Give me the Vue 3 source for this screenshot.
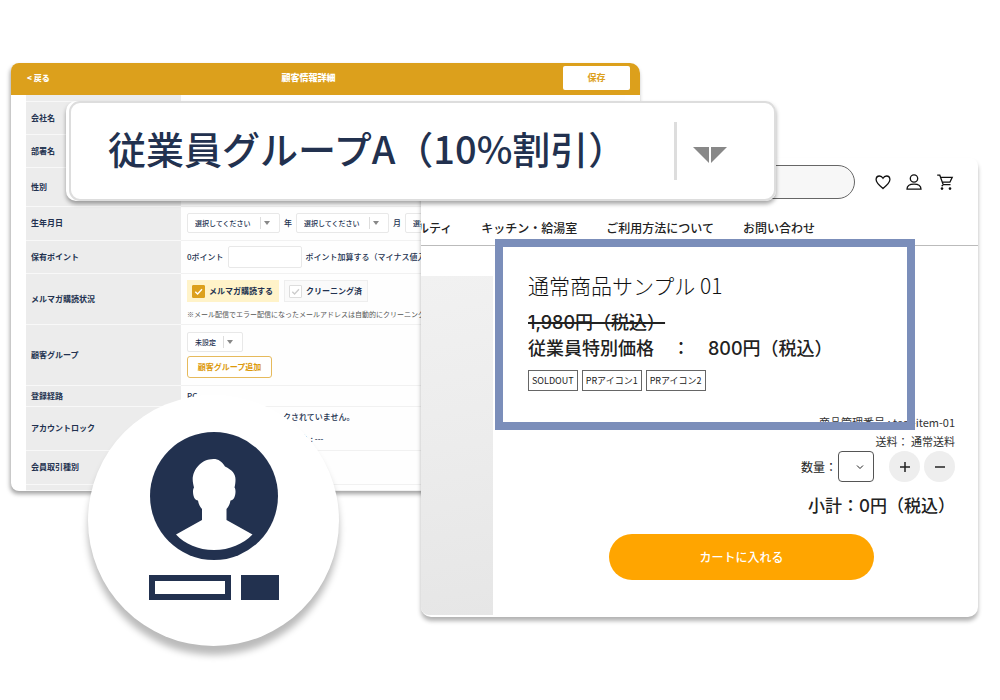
<script setup>
const labels = {
  company: '会社名',
  department: '部署名',
  gender: '性別',
}
const tags = ['SOLDOUT', 'PRアイコン1', 'PRアイコン2']
const navItems = ['ノベルティ', 'キッチン・給湯室', 'ご利用方法について', 'お問い合わせ']
</script>

<template>
  <main class="stage">
    <section class="admin" aria-label="顧客情報詳細">
      <header class="admin-head">
        <a class="back" href="#">&lt; 戻る</a>
        <h1>顧客情報詳細</h1>
        <button class="save" type="button">保存</button>
      </header>
      <div class="admin-body">
        <table>
          <tbody>
            <tr class="h-edge"><th></th><td></td></tr>
            <tr class="h-s"><th>{{ labels.company }}</th><td></td></tr>
            <tr class="h-s"><th>{{ labels.department }}</th><td></td></tr>
            <tr class="h-m"><th>{{ labels.gender }}</th><td></td></tr>
            <tr class="h-s2">
              <th>生年月日</th>
              <td>
                <div class="line">
                  <span class="pick"><select aria-label="年"><option>選択してください</option></select><i></i></span>
                  <span class="unit">年</span>
                  <span class="pick"><select aria-label="月"><option>選択してください</option></select><i></i></span>
                  <span class="unit">月</span>
                  <span class="pick"><select aria-label="日"><option>選択してください</option></select><i></i></span>
                </div>
              </td>
            </tr>
            <tr class="h-s">
              <th>保有ポイント</th>
              <td>
                <label class="line points">0ポイント<input type="text" />ポイント加算する（マイナス値入力可）</label>
              </td>
            </tr>
            <tr class="h-mail">
              <th>メルマガ購読状況</th>
              <td>
                <div class="line checks">
                  <label class="check on"><input type="checkbox" checked /><svg viewBox="0 0 12 12"><path d="M2.5 6.2 5 8.7 9.8 3.6" /></svg>メルマガ購読する</label>
                  <label class="check"><input type="checkbox" /><svg viewBox="0 0 12 12"><path d="M2.5 6.2 5 8.7 9.8 3.6" /></svg>クリーニング済</label>
                </div>
                <p class="note">※メール配信でエラー配信になったメールアドレスは自動的にクリーニングされます</p>
              </td>
            </tr>
            <tr class="h-group">
              <th>顧客グループ</th>
              <td>
                <span class="pick small"><select aria-label="顧客グループ"><option>未設定</option></select><i></i></span>
                <button class="add" type="button">顧客グループ追加</button>
              </td>
            </tr>
            <tr class="h-route"><th>登録経路</th><td>PC</td></tr>
            <tr class="h-lock">
              <th>アカウントロック</th>
              <td><p class="lock">このアカウントは現在ロックされていません。</p><p class="lock">アカウントロックの解除予定日時&nbsp; : ---</p></td>
            </tr>
            <tr class="h-s2"><th>会員取引種別</th><td></td></tr>
            <tr class="h-edge"><th></th><td></td></tr>
          </tbody>
        </table>
      </div>
    </section>

    <section class="shop" aria-label="商品ページ">
      <div class="shop-top">
        <input class="search" type="search" aria-label="検索" />
        <a href="#" aria-label="お気に入り"><svg viewBox="0 0 18 18"><path d="M9 15.6C4.6 12 2.1 9.600 2.100 6.600 2.100 4.400 3.700 3 5.500 3 7 3 8.200 3.800 9 5.200 9.800 3.800 11 3 12.500 3c1.800 0 3.400 1.400 3.400 3.600 0 3-2.500 5.400-6.900 9z" /></svg></a>
        <a href="#" aria-label="マイページ"><svg viewBox="0 0 18 18"><circle cx="9" cy="5.500" r="3.700" /><path d="M2 16.200c0-3.700 2.300-5 7-5s7 1.300 7 5z" /></svg></a>
        <a href="#" aria-label="カート"><svg viewBox="0 0 18 18"><path d="M1.200 2.200h2.600l3.400 9.400h7.300M4.600 4.400h11.600l-2.300 4.800H6.400M7.200 11.600l-1.500 1.600" /><circle class="dot" cx="6" cy="15.600" r="1.300" /><circle class="dot" cx="14" cy="15.600" r="1.300" /></svg></a>
      </div>
      <nav class="shop-nav"><a v-for="n in navItems" :key="n" href="#">{{ n }}</a></nav>
      <div class="shop-body">
        <div class="photo"></div>
        <div class="buy">
          <p class="meta">商品管理番号 : test-item-01</p>
          <p class="meta">送料： 通常送料</p>
          <div class="qty">
            <label for="qty">数量：</label>
            <span class="qty-pick"><select id="qty"><option></option></select><svg viewBox="0 0 8 8"><path d="M1 2.500 4 5.500 7 2.500" /></svg></span>
            <button type="button" aria-label="増やす"><svg viewBox="0 0 12 12"><path d="M1 6h10M6 1v10" /></svg></button>
            <button type="button" aria-label="減らす"><svg viewBox="0 0 12 12"><path d="M1 6h10" /></svg></button>
          </div>
          <p class="subtotal">小計：0円（税込）</p>
          <button class="cart" type="button">カートに入れる</button>
        </div>
      </div>
      <article class="highlight">
        <h2>通常商品サンプル 01</h2>
        <p class="price"><s>1,980円（税込）</s></p>
        <p class="price">従業員特別価格　：　800円（税込）</p>
        <ul><li v-for="t in tags" :key="t">{{ t }}</li></ul>
      </article>
    </section>

    <div class="zoomed">
      <div class="zoomed-in">
        <select aria-label="顧客グループ選択"><option>従業員グループA（10%割引）</option></select>
        <span class="bar"></span>
        <svg viewBox="0 0 34 17"><path d="M0 0h16v16zM18 0h16L18 16z" /></svg>
      </div>
    </div>

    <div class="member">
      <svg class="avatar" viewBox="0 0 128 128">
        <circle cx="64" cy="64" r="64" fill="#22314f" />
        <path fill="#fff" d="M52 88V77c-2-2-3.500-5-4-8.500-3 0-5-4-5-9 0-2 .4-3 1-4-.6-3-1.300-5-1.300-8C42.700 38 51 27 63.500 27c5 0 8.500 2.500 11.500 7.500 7 3.500 10.500 7 10.500 13 0 3-.3 5-1 8 .8 1 1 2.500 1 4 0 5-2 9-5 9-.5 3.500-2 6.500-4 8.500v11l26 14.500C93 112 80 118 64 118S35 112 26 102.500z" />
      </svg>
      <div class="plates"><span class="plate open"></span><span class="plate solid"></span></div>
    </div>
  </main>
</template>

<style>
body { background: #fff; }
</style>

<style scoped>
.stage, .stage * { box-sizing: border-box; }
.stage {
  position: relative;
  min-height: 100vh;
  overflow: hidden;
  font-family: "Noto Sans CJK JP", sans-serif;
  color: #22314f;
}
h1, h2, p, ul { margin: 0; padding: 0; }
a { color: inherit; text-decoration: none; }
button, input, select { font: inherit; color: inherit; margin: 0; }
select { appearance: none; background: none; border: 0; padding: 0; outline: 0; }

/* Admin window */
.admin {
  position: absolute;
  left: 1.1%;
  top: 63px;
  width: 62.9%;
  border-radius: 8px 10px 8px 8px;
  background: #fff;
  box-shadow: -1px 3px 4px rgba(0, 0, 0, .36);
  overflow: hidden;
  font-size: 8px;
  font-weight: 500;
}
.admin-head {
  display: grid;
  grid-template-columns: 1fr auto 1fr;
  align-items: center;
  height: 32px;
  padding: 0 10px 2px 16px;
  background: #dca01c;
  color: #fff;
}
.back { font-weight: 900; padding-bottom: 2px; }
.admin-head h1 { font-size: 9px; line-height: 12px; font-weight: 900; padding: 0 40px 0 0; }
.save {
  justify-self: end;
  width: 67px;
  height: 24px;
  border: 0;
  border-radius: 2px;
  background: #fff;
  color: #dca01c;
  font-size: 9px;
  font-weight: 700;
  padding: 0 0 2px;
}
.admin-body { padding: 0 15px; }
table { width: 100%; border-collapse: collapse; table-layout: fixed; line-height: 12px; }
tr > * { border-bottom: 1px solid #f1f1f1; padding: 0 5px; text-align: left; vertical-align: middle; }
th { width: 155px; background: #ececec; font-weight: 700; border-bottom-color: #f8f8f8; }
td { white-space: nowrap; background: #fefefe; padding-left: 6px; }
.h-edge { height: 6px; }
.h-s { height: 33px; }
.h-s2 { height: 34px; }
.h-m { height: 39px; }
.h-mail { height: 51px; }
.h-group { height: 61px; }
.h-route { height: 21px; }
.h-lock { height: 44px; }
.line { display: flex; align-items: center; }
.pick {
  display: flex;
  align-items: center;
  width: 93px;
  height: 20px;
  flex: none;
  border: 1px solid #e8e8e8;
  border-radius: 2px;
  background: #fff;
  padding: 0 6px 0 7px;
  font-size: 7px;
}
.pick select { flex: 1; min-width: 0; height: 18px; }
.pick i { display: flex; align-items: center; width: 13px; height: 12px; border-left: 1px solid #ddd; }
.pick i::after { content: ""; margin-left: 3px; border: 3px solid transparent; border-top: 4px solid #888; border-bottom: 0; }
.pick.small { width: 56px; margin-bottom: 4px; }
.unit { width: 16px; text-align: center; flex: none; }
.points input { width: 74px; height: 22px; margin: 0 4px; border: 1px solid #e8e8e8; border-radius: 2px; }
.checks { gap: 5px; margin-top: 2px; }
.check { display: flex; align-items: center; height: 22px; padding: 0 5px 0 4px; border: 1px solid #eee; background: #fafafa; font-weight: 700; position: relative; }
.check input { position: absolute; opacity: 0; }
.check svg { width: 13px; height: 13px; margin-right: 4px; border: 1px solid #ddd; border-radius: 1px; background: #fff; fill: none; stroke: #ccc; stroke-width: 1.500; }
.check.on { background: #fff3c9; border-color: #fff3c9; }
.check.on svg { background: #dca01c; border-color: #dca01c; stroke: #fff; }
.note { margin-top: 7px; font-size: 7px; line-height: 10px; color: #555; font-weight: 400; }
.add { display: block; width: 85px; height: 22px; padding: 0; border: 1px solid #e6ba5c; border-radius: 3px; background: #fff; color: #dc9a0c; font-weight: 700; }
.lock + .lock { margin-top: 10px; }

/* Shop window */
.shop {
  position: absolute;
  left: 42.1%;
  top: 158px;
  width: 55.7%;
  border-radius: 8px 8px 10px 10px;
  background: #fff;
  box-shadow: 0 4px 4px rgba(0, 0, 0, .3);
  color: #222;
}
.shop-top { display: flex; align-items: center; gap: 13px; padding: 7px 24px 0 40px; }
.search { flex: 1; min-width: 0; height: 34px; margin-right: 6px; border: 1px solid #666; border-radius: 17px; background: #f7f7f7; padding: 0 16px; }
.shop-top svg { display: block; width: 18px; height: 18px; fill: none; stroke: #111; stroke-width: 1.300; }
.shop-top svg .dot { fill: #111; stroke: none; }
.shop-nav {
  display: flex;
  justify-content: flex-end;
  gap: 29px;
  padding: 19px 163px 7px 0;
  overflow: hidden;
  border-bottom: 1px solid #bbb;
  font-size: 12px;
  line-height: 20px;
  font-weight: 500;
  white-space: nowrap;
}
.shop-nav a { flex: none; }
.shop-body { display: flex; padding-bottom: 2px; }
.photo { width: 72px; margin-top: 30px; border-bottom-left-radius: 8px; background: linear-gradient(170deg, #f1f1f1, #ececec 50%, #e6e6e6); }
.buy { flex: 1; display: flex; flex-direction: column; align-items: flex-end; padding: 167px 23px 35px 0; }
.meta { font-size: 11px; line-height: 19px; color: #333; }
.qty { display: flex; align-items: center; height: 31px; font-size: 12px; }
.qty-pick { display: flex; align-items: center; width: 36px; height: 31px; margin: 0 15px 0 1px; padding-right: 9px; border: 1px solid #555; border-radius: 4px; }
.qty-pick select { flex: 1; min-width: 0; height: 29px; }
.qty svg { fill: none; stroke: #222; stroke-width: 1; }
.qty-pick svg { width: 8px; height: 8px; }
.qty button { display: flex; align-items: center; justify-content: center; width: 31px; height: 31px; border: 0; border-radius: 50%; background: #eee; padding: 0; }
.qty button + button { margin-left: 4px; }
.qty button svg { width: 12px; height: 12px; stroke-width: 1.500; }
.subtotal { margin-top: 10px; font-family: Inter, "Noto Sans CJK JP", sans-serif; font-size: 17px; line-height: 28px; font-weight: 500; }
.cart { align-self: stretch; margin: 14px 81px 0 116px; height: 46px; border: 0; border-radius: 23px; background: #ffa500; color: #fff; font-size: 12px; font-weight: 500; padding: 0 0 2px; }
.highlight {
  position: absolute;
  left: 74px;
  right: 63px;
  top: 81px;
  height: 191px;
  padding: 23px 25px;
  border: 8px solid #7b8eba;
}
.highlight h2 { font-size: 21px; line-height: 30px; font-weight: 300; color: #111; }
.price { font-family: Inter, "Noto Sans CJK JP", sans-serif; font-size: 18px; line-height: 26px; font-weight: 500; white-space: nowrap; }
.price s { text-decoration-thickness: 2px; }
h2 + .price { margin-top: 10px; }
.highlight ul { display: flex; gap: 4px; margin-top: 8px; list-style: none; }
.highlight li { padding: 0 3px; border: 1px solid #666; font-size: 9px; line-height: 19px; }

/* Enlarged select */
.zoomed {
  position: absolute;
  left: 6.6%;
  top: 101px;
  width: 71%;
  padding-left: 3px;
  border-radius: 10px;
  background: #fff;
  box-shadow: 0 3px 4px rgba(0, 0, 0, .35);
}
.zoomed-in { display: flex; align-items: center; height: 100px; padding: 0 47px 0 37px; border: 2px solid #ddd; border-radius: 11px; }
.zoomed select { flex: 1; min-width: 0; height: 62px; padding-bottom: 6px; font-size: 38px; line-height: 56px; font-weight: 500; }
.bar { width: 3px; height: 58px; background: #ddd; margin-right: 16px; }
.zoomed svg { width: 34px; height: 17px; margin-top: 8px; fill: #888; }

/* Member badge */
.member {
  position: absolute;
  left: 8.8%;
  top: 395px;
  width: 251px;
  height: 251px;
  display: flex;
  flex-direction: column;
  align-items: center;
  padding-top: 37px;
  border-radius: 50%;
  background: #fff;
  box-shadow: 0 9px 7px rgba(0, 0, 0, .27);
}
.avatar { width: 128px; height: 128px; }
.plates { display: flex; gap: 10px; margin-top: 15px; }
.plate { height: 25px; background: #22314f; }
.open { width: 82px; border: 6px solid #22314f; background: #fff; }
.solid { width: 38px; }
</style>
